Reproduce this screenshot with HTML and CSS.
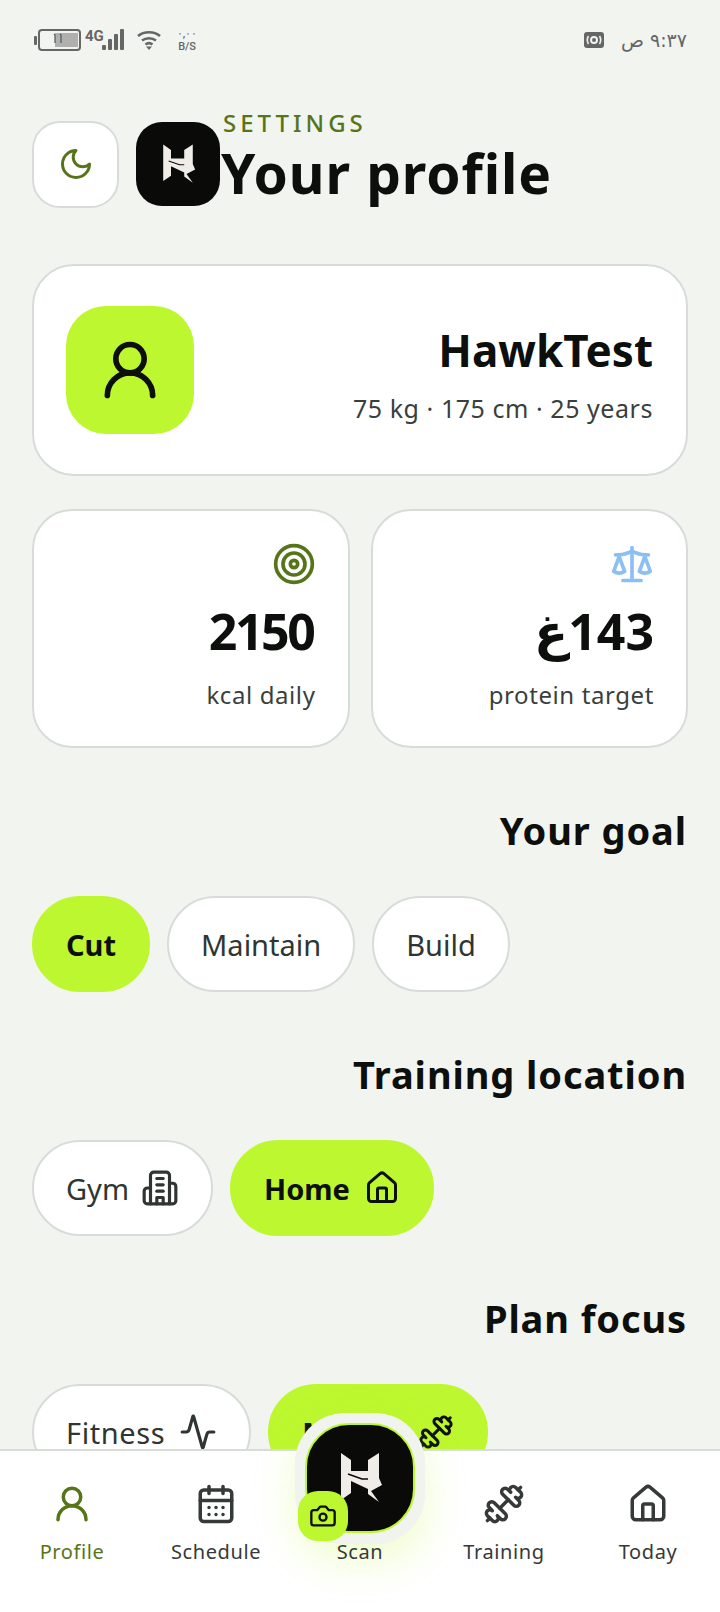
FILE: index.html
```html
<!DOCTYPE html>
<html lang="en">
<head>
<meta charset="utf-8">
<title>Your profile</title>
<link rel="stylesheet" href="styles.css">
</head>
<body>
<svg class="defs" width="0" height="0">
	<symbol id="i-user" viewBox="0 0 24 24"><circle cx="12" cy="8" r="5"/><path d="M20 21a8 8 0 0 0-16 0"/></symbol>
	<symbol id="i-moon" viewBox="0 0 24 24"><path d="M12 3a6 6 0 0 0 9 9 9 9 0 1 1-9-9Z"/></symbol>
	<symbol id="i-target" viewBox="0 0 24 24"><circle cx="12" cy="12" r="10"/><circle cx="12" cy="12" r="6"/><circle cx="12" cy="12" r="2"/></symbol>
	<symbol id="i-scale" viewBox="0 0 24 24"><path d="m16 16 3-8 3 8c-.87.65-1.92 1-3 1s-2.13-.35-3-1Z"/><path d="m2 16 3-8 3 8c-.87.65-1.92 1-3 1s-2.13-.35-3-1Z"/><path d="M7 21h10"/><path d="M12 3v18"/><path d="M3 7h2c2 0 5-1 7-2 2 1 5 2 7 2h2"/></symbol>
	<symbol id="i-building" viewBox="0 0 24 24"><path d="M6 22V4a2 2 0 0 1 2-2h8a2 2 0 0 1 2 2v18Z"/><path d="M6 12H4a2 2 0 0 0-2 2v6a2 2 0 0 0 2 2h2"/><path d="M18 9h2a2 2 0 0 1 2 2v9a2 2 0 0 1-2 2h-2"/><path d="M10 6h4"/><path d="M10 10h4"/><path d="M10 14h4"/><path d="M10 22v-4h4v4"/></symbol>
	<symbol id="i-house" viewBox="0 0 24 24"><path d="M15 21v-8a1 1 0 0 0-1-1h-4a1 1 0 0 0-1 1v8"/><path d="M3 10a2 2 0 0 1 .709-1.528l7-5.999a2 2 0 0 1 2.582 0l7 5.999A2 2 0 0 1 21 10v9a2 2 0 0 1-2 2H5a2 2 0 0 1-2-2z"/></symbol>
	<symbol id="i-activity" viewBox="0 0 24 24"><path d="M22 12h-2.48a2 2 0 0 0-1.93 1.46l-2.35 8.36a.25.25 0 0 1-.48 0L9.24 2.18a.25.25 0 0 0-.48 0l-2.35 8.36A2 2 0 0 1 4.49 12H2"/></symbol>
	<symbol id="i-dumbbell" viewBox="0 0 24 24"><g transform="matrix(-1 0 0 1 24 0)"><path d="M14.4 14.4 9.6 9.6"/><path d="M18.657 21.485a2 2 0 1 1-2.829-2.828l-1.767 1.768a2 2 0 1 1-2.829-2.829l6.364-6.364a2 2 0 1 1 2.829 2.829l-1.768 1.767a2 2 0 1 1 2.828 2.829z"/><path d="m21.5 21.5-1.4-1.4"/><path d="M3.9 3.9 2.5 2.5"/><path d="M6.404 12.768a2 2 0 1 1-2.829-2.829l1.768-1.767a2 2 0 1 1-2.828-2.829l2.828-2.828a2 2 0 1 1 2.829 2.828l1.767-1.768a2 2 0 1 1 2.829 2.829z"/></g></symbol>
	<symbol id="i-calendar" viewBox="0 0 24 24"><path d="M8 2v4"/><path d="M16 2v4"/><rect x="3" y="4" width="18" height="18" rx="2"/><path d="M3 10h18"/><path d="M8 14h.01M12 14h.01M16 14h.01M8 18h.01M12 18h.01M16 18h.01"/></symbol>
	<symbol id="i-camera" viewBox="0 0 24 24"><path d="M14.5 4h-5L7 7H4a2 2 0 0 0-2 2v9a2 2 0 0 0 2 2h16a2 2 0 0 0 2-2V9a2 2 0 0 0-2-2h-3l-2.5-3z"/><circle cx="12" cy="13" r="3"/></symbol>
	<symbol id="i-hawk" viewBox="0 0 108 108">
		<path class="hawkWhite" d="M35 29 45 36V47H62V36L73 29V54L76 61 65 67 73 78 62 70V65L45 57V69L35 76Z"/>
		<path class="hawkCut" d="M42 50 56 55 62 55"/>
	</symbol>
</svg>

<div class="page">
	<div class="statusBar">
		<div class="statusLeft">
			<svg class="battery" width="48" height="24" viewBox="0 0 48 24">
				<rect x="0" y="8" width="3" height="9" rx="1" fill="#666"/>
				<rect x="5" y="2" width="41" height="20" rx="3" fill="none" stroke="#666" stroke-width="2"/>
				<rect x="21" y="5" width="23" height="14" fill="#b0b0b0"/>
				<path d="M20 6l1 1v8M26 6l1 1v8" fill="none" stroke="#555" stroke-width="1.2"/>
			</svg>
			<span class="net">4G</span>
			<svg class="bars" width="22" height="22" viewBox="0 0 22 22" fill="#666">
				<rect x="0" y="16" width="4" height="5" rx="1"/><rect x="6" y="10" width="4" height="11" rx="1"/><rect x="12" y="5" width="4" height="16" rx="1"/><rect x="18" y="0" width="4" height="21" rx="1"/>
			</svg>
			<svg class="wifi" width="26" height="22" viewBox="0 0 26 22" fill="none" stroke="#666" stroke-width="2.6">
				<path d="M2 7c6-5 16-5 22 0"/><path d="M6 11.5c4-3 10-3 14 0"/><path d="M9.5 15.5c2-1.500 5-1.500 7 0"/><path d="M13 21l-3-3.500h6z" fill="#666" stroke="none"/>
			</svg>
			<div class="speed"><span>٠,٠٠</span><span>B/S</span></div>
		</div>
		<div class="statusRight">
			<svg width="20" height="16" viewBox="0 0 20 16">
				<rect width="20" height="16" rx="3" fill="#666"/>
				<circle cx="10" cy="8" r="3" fill="none" stroke="#f2f4f0" stroke-width="2"/>
				<path d="M4.500 4c-1.500 2.500-1.500 5.500 0 8M15.500 4c1.500 2.500 1.500 5.500 0 8" fill="none" stroke="#f2f4f0" stroke-width="1.600"/>
			</svg>
			<span class="clock" dir="rtl">٩:٣٧ ص</span>
		</div>
	</div>

	<div class="header">
		<div class="moonBtn"><svg class="icon olive" width="36" height="36"><use href="#i-moon"/></svg></div>
		<div class="logo"><svg width="84" height="84"><use href="#i-hawk"/></svg></div>
		<div class="titles">
			<span class="eyebrow">SETTINGS</span>
			<h1>Your profile</h1>
		</div>
	</div>

	<div class="profileCard">
		<div class="avatar"><svg class="icon" width="68" height="68"><use href="#i-user"/></svg></div>
		<div class="who">
			<div class="name">HawkTest</div>
			<div class="meta">75 kg · 175 cm · 25 years</div>
		</div>
	</div>

	<div class="stats">
		<div class="stat">
			<svg class="icon olive" width="44" height="44"><use href="#i-target"/></svg>
			<div class="value kcal">2150</div>
			<div class="label">kcal daily</div>
		</div>
		<div class="stat">
			<svg class="icon sky" width="44" height="44"><use href="#i-scale"/></svg>
			<div class="value" dir="rtl">143غ</div>
			<div class="label">protein target</div>
		</div>
	</div>

	<h2>Your goal</h2>
	<div class="chips">
		<div class="chip on">Cut</div>
		<div class="chip">Maintain</div>
		<div class="chip">Build</div>
	</div>

	<h2>Training location</h2>
	<div class="chips">
		<div class="chip tight">Gym <svg class="icon" width="38" height="38"><use href="#i-building"/></svg></div>
		<div class="chip on">Home <svg class="icon" width="36" height="36"><use href="#i-house"/></svg></div>
	</div>

	<h2>Plan focus</h2>
	<div class="chips">
		<div class="chip spaced">Fitness <svg class="icon" width="38" height="38"><use href="#i-activity"/></svg></div>
		<div class="chip on">Muscle <svg class="icon" width="36" height="36"><use href="#i-dumbbell"/></svg></div>
	</div>

	<div class="tabBar">
		<div class="tab active"><svg class="icon" width="42" height="42"><use href="#i-user"/></svg><span>Profile</span></div>
		<div class="tab"><svg class="icon" width="42" height="42"><use href="#i-calendar"/></svg><span>Schedule</span></div>
		<div class="tab scanTab">
			<div class="scanRing">
				<div class="scanBtn"><svg width="108" height="108"><use href="#i-hawk"/></svg></div>
				<div class="scanBadge"><svg class="icon" width="28" height="28"><use href="#i-camera"/></svg></div>
			</div>
			<span>Scan</span>
		</div>
		<div class="tab"><svg class="icon" width="42" height="42"><use href="#i-dumbbell"/></svg><span>Training</span></div>
		<div class="tab"><svg class="icon" width="42" height="42"><use href="#i-house"/></svg><span>Today</span></div>
	</div>
</div>
</body>
</html>
```

FILE: styles.css
```css
*{
	box-sizing:border-box;
}
body{
	margin:0;
	background:#f2f4f0;
	font-family:"Noto Sans","DejaVu Sans",sans-serif;
	color:#0d0f0d;
}
.defs{
	position:absolute;
}
.hawkWhite{
	fill:#f0ede8;
	stroke:none;
}
.hawkCut{
	fill:none;
	stroke:#0a0a08;
	stroke-width:1.4;
}
.icon{
	fill:none;
	stroke:currentColor;
	stroke-width:2;
	stroke-linecap:round;
	stroke-linejoin:round;
	flex:none;
}
.olive{
	color:#56741a;
}
.sky{
	color:#8cc0f5;
}
.page{
	position:relative;
	width:720px;
	height:1612px;
	overflow:hidden;
	padding:0 32px;
}

/* status bar */
.statusBar{
	display:flex;
	justify-content:space-between;
	align-items:center;
	height:26px;
	margin-top:27px;
	color:#666;
}
.statusLeft{
	display:flex;
	align-items:center;
	margin-left:2px;
}
.net{
	font:700 15px "Roboto",sans-serif;
	margin:-8px 0 0 3px;
}
.bars{
	margin-left:-2px;
}
.wifi{
	margin-left:12px;
}
.speed{
	display:flex;
	flex-direction:column;
	align-items:center;
	margin-left:15px;
	font:500 11px/13px "Roboto",sans-serif;
}
.statusRight{
	display:flex;
	align-items:center;
	gap:17px;
	margin-right:1px;
}
.clock{
	font:400 19px "DejaVu Sans",sans-serif;
}

/* header */
.header{
	display:flex;
	align-items:center;
	margin-top:56px;
}
.moonBtn{
	width:87px;
	height:87px;
	border:2px solid #d8dcd8;
	border-radius:28px;
	background:#fff;
	display:flex;
	align-items:center;
	justify-content:center;
}
.logo{
	width:84px;
	height:84px;
	margin:0 1px 0 17px;
	border-radius:26px;
	background:#0a0a08;
}
.titles{
	display:flex;
	flex-direction:column;
	padding-bottom:11px;
}
.eyebrow{
	font-size:24px;
	line-height:28px;
	font-weight:500;
	letter-spacing:4px;
	color:#56741a;
	margin-left:2px;
}
h1{
	margin:0;
	font-size:55px;
	line-height:71px;
	font-weight:700;
	letter-spacing:.9px;
}

/* profile */
.profileCard{
	display:flex;
	justify-content:space-between;
	align-items:center;
	height:212px;
	margin-top:45px;
	padding:0 32px 0 32px;
	background:#fff;
	border:2px solid #d8dcd8;
	border-radius:42px;
}
.avatar{
	width:128px;
	height:128px;
	border-radius:40px;
	background:#bdf72f;
	display:flex;
	align-items:center;
	justify-content:center;
}
.who{
	text-align:right;
	padding:7px 1px 0 0;
}
.name{
	font-size:44px;
	line-height:56px;
	font-weight:700;
}
.meta{
	margin-top:13px;
	font-size:25px;
	line-height:34px;
	letter-spacing:.55px;
	color:#3a3f3d;
}

/* stats */
.stats{
	display:grid;
	grid-template-columns:1fr 1fr;
	gap:21px;
	margin:33px 0 1px 0;
}
.stat{
	height:239px;
	padding:31px 32px 0 32px;
	background:#fff;
	border:2px solid #d8dcd8;
	border-radius:40px;
	display:flex;
	flex-direction:column;
	align-items:flex-end;
}
.value{
	margin-top:12px;
	font-size:50px;
	line-height:66px;
	font-weight:700;
	letter-spacing:-2px;
}
.value.kcal{
	letter-spacing:-2.4px;
	margin-right:2px;
}
.label{
	margin-top:15px;
	font-size:24px;
	line-height:32px;
	letter-spacing:.6px;
	color:#3a3f3d;
}

/* sections */
h2{
	margin:57px 1px 0 0;
	text-align:right;
	font-size:38px;
	line-height:50px;
	font-weight:700;
	letter-spacing:.9px;
}
.chips{
	display:flex;
	gap:17px;
	margin-top:41px;
}
.chip{
	display:flex;
	align-items:center;
	gap:14px;
	height:96px;
	padding:0 32px;
	border:2px solid #d8dcd8;
	border-radius:48px;
	background:#fff;
	font-size:29px;
	color:#2f3533;
}
.chip.tight{
	gap:12px;
}
.chip.spaced{
	letter-spacing:.6px;
}
.chip.on{
	background:#bdf72f;
	border-color:#bdf72f;
	font-weight:700;
	color:#0d0f0d;
}

/* bottom tabs */
.tabBar{
	position:absolute;
	left:0;
	right:0;
	bottom:0;
	height:163px;
	display:grid;
	grid-template-columns:repeat(5,144px);
	background:#fff;
	border-top:2px solid #d8dcd8;
}
.tab{
	position:relative;
	display:flex;
	flex-direction:column;
	align-items:center;
	padding-top:32px;
	gap:13px;
	font-size:20px;
	line-height:28px;
	letter-spacing:.6px;
	color:#353a38;
}
.tab.active{
	color:#56741a;
}
.scanTab span{
	position:relative;
	margin-top:55px;
}
.scanRing{
	position:absolute;
	top:-38px;
	left:7px;
	width:130px;
	height:131px;
	padding:10px;
	border-radius:50px;
	background:#f0f3ee;
	box-shadow:0 16px 40px rgba(189,247,47,.25);
}
.scanBtn{
	width:110px;
	height:110px;
	border:2px solid #bdf72f;
	border-radius:44px;
	background:#0a0a08;
}
.scanBtn svg{
	margin:-1px;
}
.scanBadge{
	position:absolute;
	left:3px;
	bottom:3px;
	width:50px;
	height:50px;
	border-radius:20px;
	background:#bdf72f;
	color:#0d0f0d;
	display:flex;
	align-items:center;
	justify-content:center;
}
```
